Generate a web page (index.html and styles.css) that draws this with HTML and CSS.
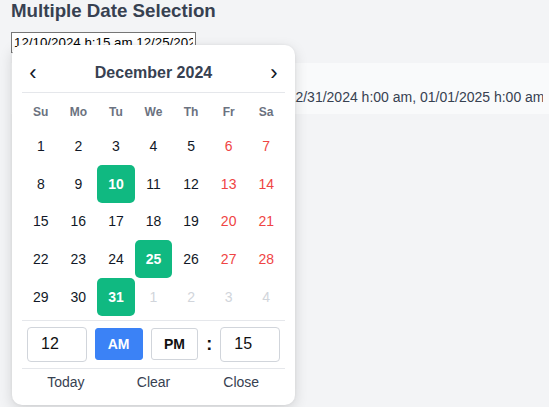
FILE: index.html
```html
<!DOCTYPE html>
<html>
<head>
<meta charset="utf-8">
<link rel="stylesheet" href="styles.css">
</head>
<body>
<div class="page">
  <h1 class="title">Multiple Date Selection</h1>
  <div class="field">
    <input class="date-input" type="text" value="12/10/2024 h:15 am 12/25/2024 h:00 am 12/31/2024 h:00 am">
    <div class="picker">
      <div class="picker-head">
        <span class="nav">‹</span>
        <span class="month">December 2024</span>
        <span class="nav">›</span>
      </div>
      <div class="grid">
        <div class="wd">Su</div><div class="wd">Mo</div><div class="wd">Tu</div><div class="wd">We</div><div class="wd">Th</div><div class="wd">Fr</div><div class="wd">Sa</div>
        <div class="d">1</div><div class="d">2</div><div class="d">3</div><div class="d">4</div><div class="d">5</div><div class="d we">6</div><div class="d we">7</div>
        <div class="d">8</div><div class="d">9</div><div class="d sel">10</div><div class="d">11</div><div class="d">12</div><div class="d we">13</div><div class="d we">14</div>
        <div class="d">15</div><div class="d">16</div><div class="d">17</div><div class="d">18</div><div class="d">19</div><div class="d we">20</div><div class="d we">21</div>
        <div class="d">22</div><div class="d">23</div><div class="d">24</div><div class="d sel">25</div><div class="d">26</div><div class="d we">27</div><div class="d we">28</div>
        <div class="d">29</div><div class="d">30</div><div class="d sel">31</div><div class="d out">1</div><div class="d out">2</div><div class="d out">3</div><div class="d out">4</div>
      </div>
      <div class="time">
        <div class="tbox">12</div>
        <div class="ampm active">AM</div>
        <div class="ampm">PM</div>
        <div class="colon">:</div>
        <div class="tbox">15</div>
      </div>
      <div class="foot">
        <span class="fbtn">Today</span>
        <span class="fbtn">Clear</span>
        <span class="fbtn">Close</span>
      </div>
    </div>
  </div>
  <div class="result">
    <div class="result-label">Selected dates:</div>
    <div class="result-value">12/10/2024 h:15 am, 12/25/2024 h:00 am, 12/31/2024 h:00 am, 01/01/2025 h:00 am</div>
  </div>
</div>
</body>
</html>
```
FILE: styles.css
```css
* { box-sizing: border-box; }
html, body { margin: 0; padding: 0; }
body {
  background: #f3f4f6;
  font-family: "Liberation Sans", Arial, sans-serif;
  color: #374151;
  width: 549px;
  height: 407px;
  overflow: hidden;
}
.page { padding: 0 0 0 11px; }
.title {
  margin: 0;
  font-size: 18.72px;
  line-height: 22px;
  font-weight: bold;
  color: #374151;
}
.field { position: relative; margin-top: 10px; }
.date-input {
  display: block;
  width: 185px;
  height: 21px;
  margin: 0;
  padding: 1px 2px;
  border: 1px solid #767676;
  background: #fff;
  font-family: "Liberation Sans", Arial, sans-serif;
  font-size: 13.33px;
  color: #000;
}
.picker {
  position: absolute;
  left: 1px;
  top: 13px;
  width: 283px;
  height: 360px;
  background: #fff;
  border-radius: 10px;
  box-shadow: 0 4px 14px rgba(0,0,0,0.14), 0 0 3px rgba(0,0,0,0.06);
  padding: 10px 10px;
  z-index: 5;
}
.picker-head {
  display: flex;
  align-items: center;
  justify-content: space-between;
  height: 38px;
  padding: 0 6px 1px 6px;
  border-bottom: 1px solid #e5e7eb;
}
.nav { font-size: 22px; color: #111827; line-height: 1; width: 10px; text-align: center; }
.month { font-size: 16px; font-weight: bold; color: #374151; }
.grid {
  display: grid;
  grid-template-columns: repeat(7, 1fr);
  grid-auto-rows: 37.8px;
  margin-top: 4px;
  grid-template-rows: 30px;
}
.wd {
  display: flex; align-items: center; justify-content: center;
  font-size: 12px; font-weight: bold; color: #6b7280;
}
.d {
  display: flex; align-items: center; justify-content: center;
  font-size: 14px; color: #111827;
  border-radius: 5px;
}
.d.we { color: #ef4444; }
.d.out { color: #d1d5db; }
.d.sel { background: #10b981; color: #fff; font-weight: bold; }
.time {
  display: flex;
  align-items: center;
  gap: 8px;
  margin-top: 4px;
  padding: 6px 5px;
  border-top: 1px solid #e5e7eb;
  border-bottom: 1px solid #e5e7eb;
}
.tbox {
  width: 60px; height: 35px;
  border: 1px solid #d1d5db; border-radius: 4px;
  display: flex; align-items: center;
  padding-left: 13px;
  font-size: 16px; color: #111;
}
.ampm {
  width: 48px; height: 32px;
  border: 1px solid #d1d5db; border-radius: 3px;
  display: flex; align-items: center; justify-content: center;
  font-size: 14px; font-weight: bold; color: #111;
}
.ampm.active { background: #3b82f6; border-color: #3b82f6; color: #fff; }
.colon { width: 6px; font-size: 18px; font-weight: bold; color: #111; text-align: center; }
.foot { display: flex; padding-top: 5px; }
.fbtn { flex: 1; text-align: center; font-size: 14px; line-height: 16px; color: #374151; }
.result {
  margin-top: 10px;
  background: #f9fafb;
  padding: 8px 6px 8px 12px;
  font-size: 14px;
  line-height: 17.5px;
  color: #374151;
}
.result-value { white-space: nowrap; text-align: right; overflow: hidden; }
```
